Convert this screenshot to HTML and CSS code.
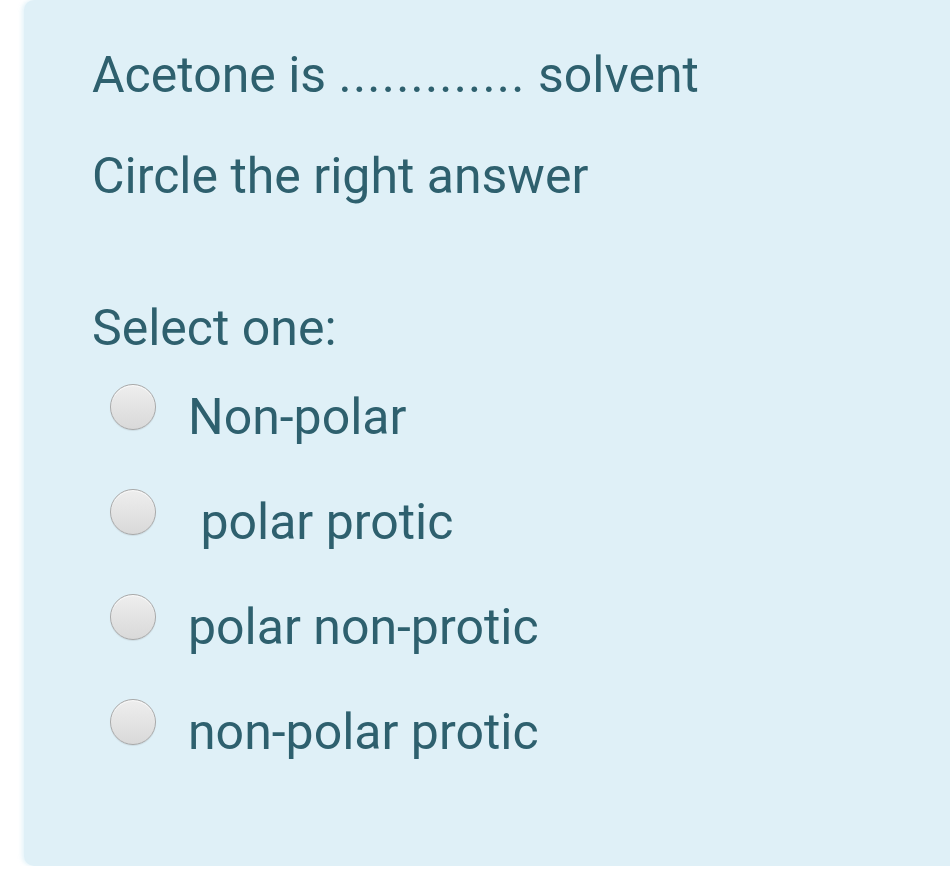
FILE: index.html
```html
<!DOCTYPE html>
<html lang="en">
<head>
<meta charset="utf-8">
<title>Question</title>
<link rel="stylesheet" href="styles.css">
</head>
<body>
<div class="panel">
  <p class="qtext">Acetone is <span class="dots">.............</span> solvent</p>
  <p class="qtext second">Circle the right answer</p>
  <p class="prompt">Select one:</p>
  <div class="answers">
    <label class="option"><span class="radio"></span><span class="label">Non-polar</span></label>
    <label class="option"><span class="radio"></span><span class="label">&nbsp;polar protic</span></label>
    <label class="option"><span class="radio"></span><span class="label">polar non-protic</span></label>
    <label class="option"><span class="radio"></span><span class="label">non-polar protic</span></label>
  </div>
</div>
</body>
</html>
```

FILE: styles.css
```css
html, body {
  margin: 0;
  padding: 0;
  background: #ffffff;
}

body {
  font-family: Roboto, "Liberation Sans", sans-serif;
  color: #2e606e;
  overflow: hidden;
}

.panel {
  margin-left: 24px;
  height: 866px;
  box-sizing: border-box;
  padding: 47px 0 0 68px;
  background: #dff0f7;
  border-radius: 10px 0 0 10px;
  box-shadow: -2px 0 4px rgba(215, 238, 246, 0.7);
}

.qtext,
.prompt {
  margin: 0;
  font-size: 50px;
  line-height: 56px;
  white-space: nowrap;
}

.dots {
  letter-spacing: 1.2px;
}

.qtext.second {
  margin-top: 45px;
}

.prompt {
  margin-top: 96px;
}

.answers {
  margin-top: 27px;
  display: flex;
  flex-direction: column;
  gap: 37px;
}

.option {
  display: flex;
  align-items: flex-start;
  height: 68px;
}

.radio {
  flex: none;
  width: 44px;
  height: 44px;
  margin-top: 1px;
  margin-left: 18px;
  border: 1px solid #a8a8a8;
  border-radius: 50%;
  background: linear-gradient(#eeeeee, #d9d9d9);
  box-shadow: inset 0 1px 1px rgba(255, 255, 255, 0.8), 0 1px 1px rgba(0, 0, 0, 0.08);
}

.label {
  margin-left: 32px;
  font-size: 50px;
  line-height: 68px;
  white-space: nowrap;
}
```
